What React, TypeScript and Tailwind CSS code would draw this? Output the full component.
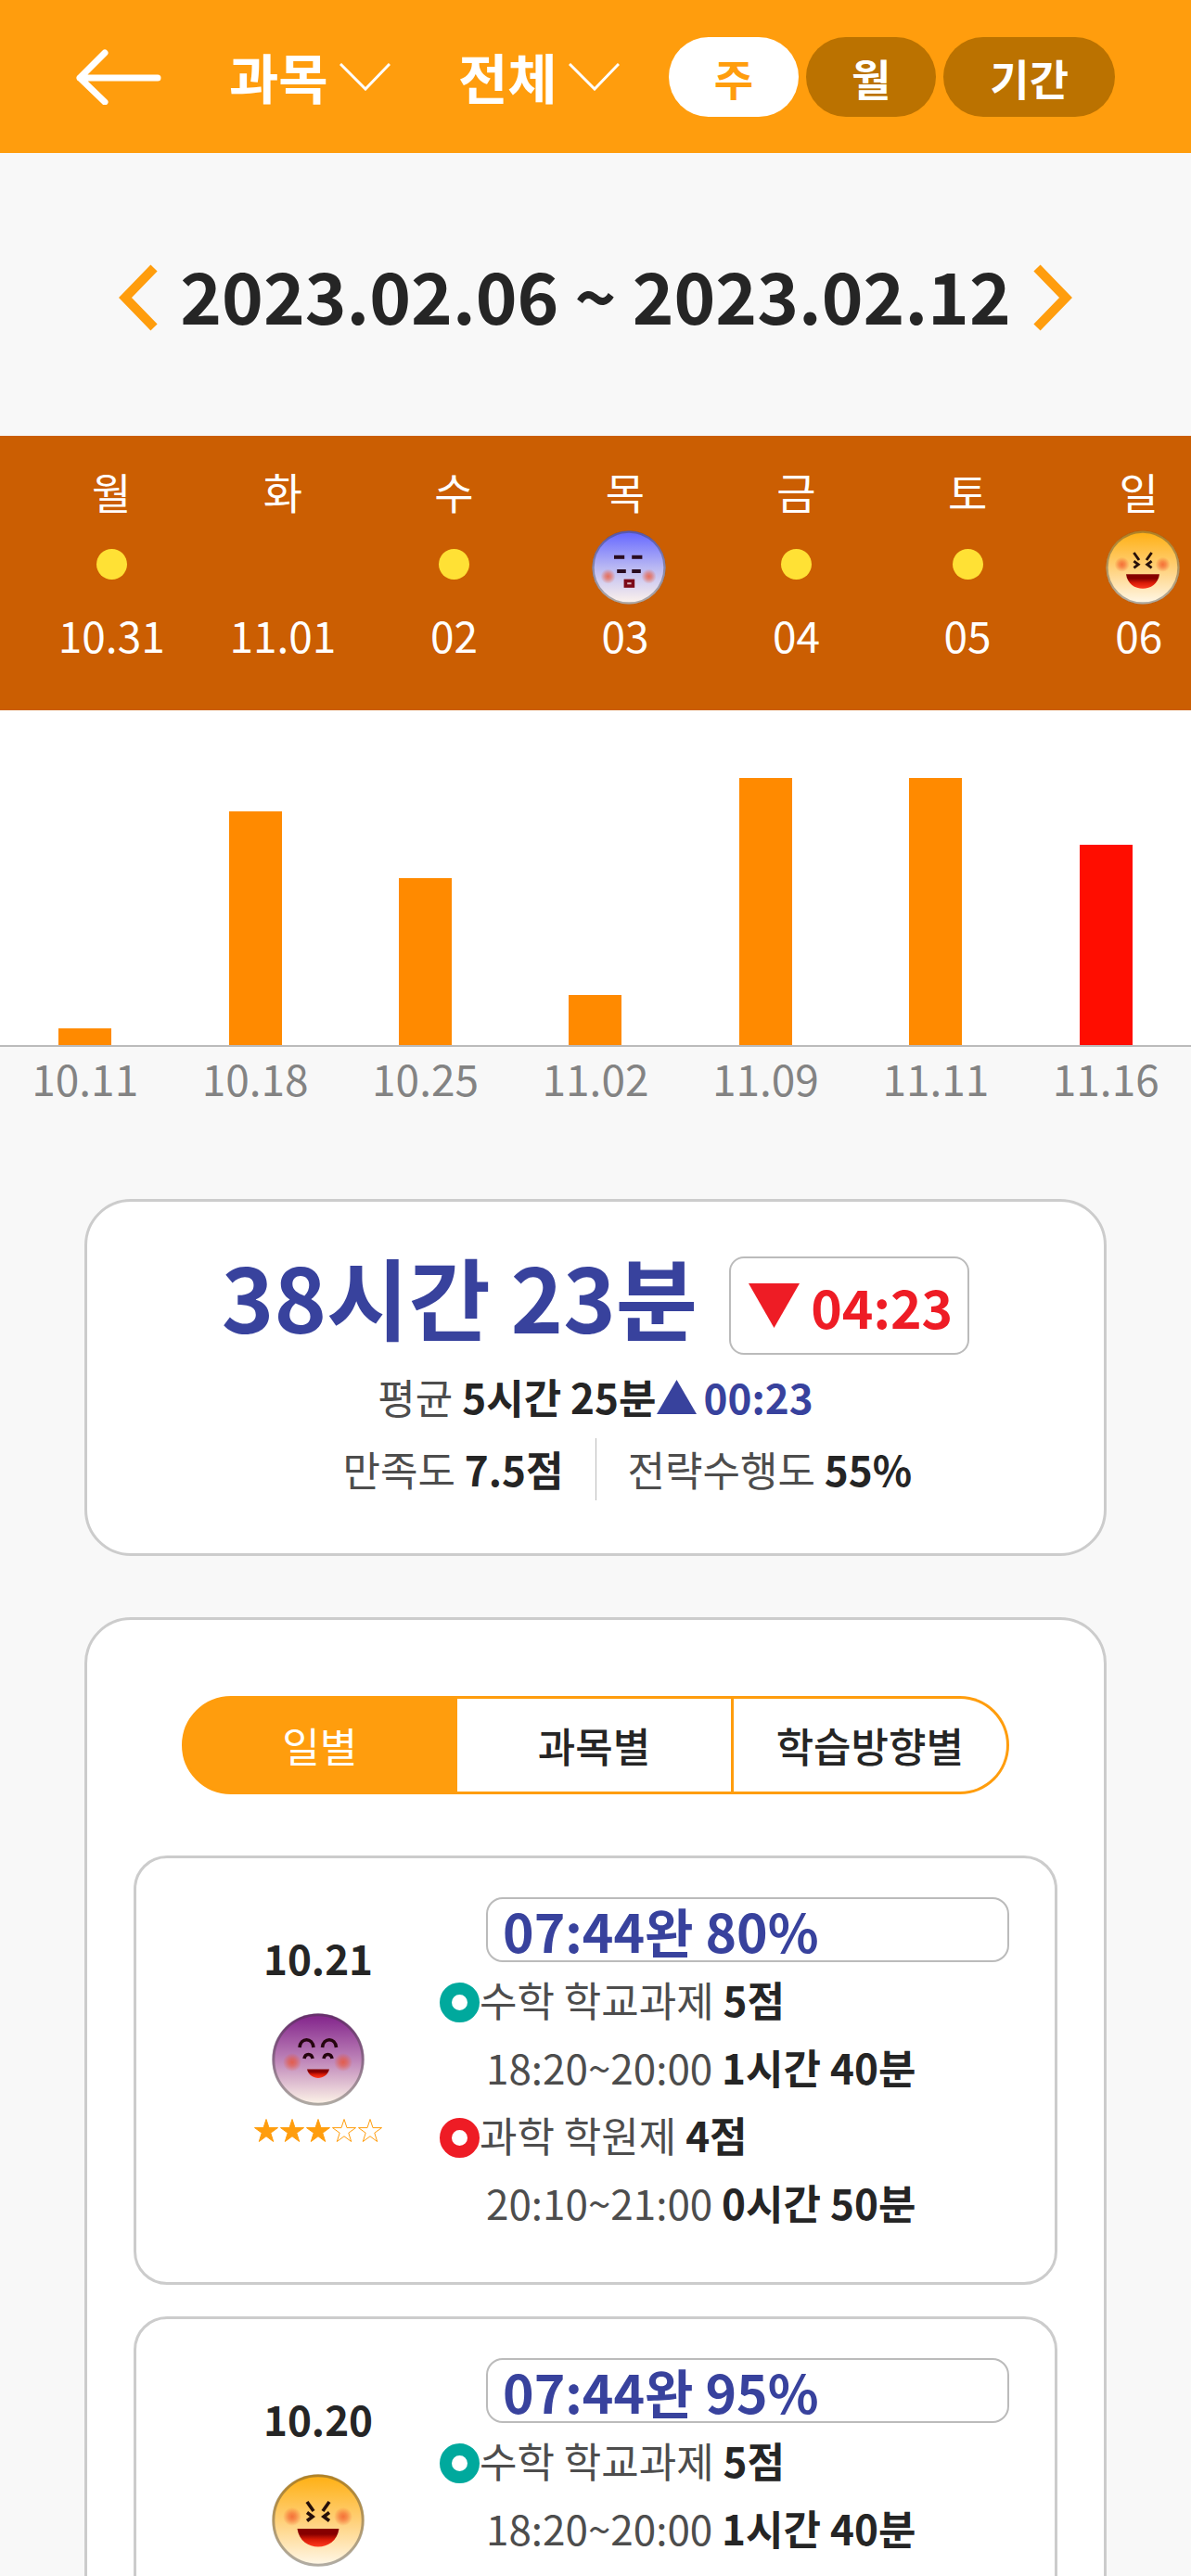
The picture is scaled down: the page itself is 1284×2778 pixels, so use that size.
import { useId } from "react";

type Mood = "sleepy" | "laugh" | "happy";

interface WeekDay {
  day: string;
  date: string;
  mark?: "dot" | Mood;
}

interface Task {
  name: string;
  score: string;
  range: string;
  duration: string;
  ring: string;
}

interface DayRecord {
  date: string;
  mood: Mood;
  stars: number;
  summary: string;
  tasks: Task[];
}

const week: WeekDay[] = [
  { day: "월", date: "10.31", mark: "dot" },
  { day: "화", date: "11.01" },
  { day: "수", date: "02", mark: "dot" },
  { day: "목", date: "03", mark: "sleepy" },
  { day: "금", date: "04", mark: "dot" },
  { day: "토", date: "05", mark: "dot" },
  { day: "일", date: "06", mark: "laugh" },
];

const chart = [
  { label: "10.11", value: 1 },
  { label: "10.18", value: 14 },
  { label: "10.25", value: 10 },
  { label: "11.02", value: 3 },
  { label: "11.09", value: 16 },
  { label: "11.11", value: 16 },
  { label: "11.16", value: 12, active: true },
];

const UNIT_HEIGHT = 18;

const tasks: Task[] = [
  {
    name: "수학 학교과제",
    score: "5점",
    range: "18:20~20:00",
    duration: "1시간 40분",
    ring: "border-[#00a99d]",
  },
  {
    name: "과학 학원제",
    score: "4점",
    range: "20:10~21:00",
    duration: "0시간 50분",
    ring: "border-[#ee1c25]",
  },
];

const records: DayRecord[] = [
  { date: "10.21", mood: "happy", stars: 3, summary: "07:44완 80%", tasks },
  { date: "10.20", mood: "laugh", stars: 3, summary: "07:44완 95%", tasks },
];

const moodColors = {
  sleepy: { top: "#6a6cff", middle: "#b9b8f3", bottom: "#fbf1ec", cheekY: 62 },
  laugh: { top: "#ffb21a", middle: "#ffd078", bottom: "#fff6e4", cheekY: 46 },
  happy: { top: "#862a8e", middle: "#bd83b8", bottom: "#fbf0e6", cheekY: 53 },
};

const Face = ({ mood, className }: { mood: Mood; className: string }) => {
  const id = useId();
  const { top, middle, bottom, cheekY } = moodColors[mood];

  return (
    <svg className={className} viewBox="0 0 100 100" aria-hidden="true">
      <defs>
        <linearGradient id={`${id}-skin`} x1="0" y1="0" x2="0" y2="1">
          <stop offset="0.05" stopColor={top} />
          <stop offset="0.5" stopColor={middle} />
          <stop offset="0.97" stopColor={bottom} />
        </linearGradient>
        <radialGradient id={`${id}-cheek`}>
          <stop offset="0" stopColor="#f04a20" stopOpacity="0.7" />
          <stop offset="0.4" stopColor="#f04a20" stopOpacity="0.5" />
          <stop offset="1" stopColor="#f04a20" stopOpacity="0" />
        </radialGradient>
        <linearGradient id={`${id}-mouth`} x1="0" y1="0" x2="0" y2="1">
          <stop offset="0.3" stopColor="#860000" />
          <stop offset="0.6" stopColor="#d81a06" />
          <stop offset="1" stopColor="#ff3a20" />
        </linearGradient>
      </defs>
      <circle cx="50" cy="50" r="49.5" fill={`url(#${id}-skin)`} />
      <circle cx="50" cy="50" r="48.2" fill="none" stroke="#3c3c3c" strokeOpacity="0.4" strokeWidth="3" />
      <circle cx="22" cy={cheekY} r="10" fill={`url(#${id}-cheek)`} />
      <circle cx="77" cy={cheekY} r="10" fill={`url(#${id}-cheek)`} />
      {mood === "happy" && (
        <>
          <g fill="none" stroke="#26050f" strokeWidth="3.6">
            <path d="M30 37 C31 26 44 26 45 37" />
            <path d="M54.500 37 C55.500 26 68.500 26 69.500 37" />
            <path d="M35 49 C36 43 43 43 44 49" />
            <path d="M56 49 C57 43 64 43 65 49" />
          </g>
          <path d="M38 60.500 H62 C59 73 41 73 38 60.500Z" fill={`url(#${id}-mouth)`} />
        </>
      )}
      {mood === "laugh" && (
        <>
          <g fill="none" stroke="#26100a" strokeWidth="3.6">
            <path d="M38 30 L45 40" />
            <path d="M62 30 L55 40" />
            <path d="M38 41.500 L44 46 L38 50.500" />
            <path d="M62 41.500 L56 46 L62 50.500" />
          </g>
          <path d="M27.500 59 H72.500 C69 85 31 85 27.500 59Z" fill={`url(#${id}-mouth)`} />
        </>
      )}
      {mood === "sleepy" && (
        <>
          <g stroke="#2a0c20" strokeWidth="5">
            <path d="M30 36 H44" />
            <path d="M54 36 H68" />
            <path d="M34 55 H46" />
            <path d="M54 55 H66" />
          </g>
          <rect x="45.500" y="68" width="10" height="7" fill="#d9b4bd" stroke="#7c0a18" strokeWidth="4.500" />
        </>
      )}
    </svg>
  );
};

const Filter = ({ id, label }: { id: string; label: string }) => (
  <div className="flex items-center gap-2">
    <label htmlFor={id} className="sr-only">
      {label}
    </label>
    <select id={id} className="appearance-none overflow-visible bg-transparent px-1 text-[58px] leading-normal font-bold text-white">
      <option>{label}</option>
    </select>
    <svg className="h-[30px] w-[55px]" viewBox="0 0 55 30" fill="none" stroke="white" strokeWidth="3" aria-hidden="true">
      <path d="M1 1 L28 28 L54 1" />
    </svg>
  </div>
);

const Header = () => (
  <header className="flex items-center bg-[#ff9d0d] px-[82px] py-[39px]">
    <button type="button" aria-label="뒤로" className="mr-[69px]">
      <svg className="h-[60px] w-[92px]" viewBox="0 0 92 60" fill="none" stroke="white" strokeWidth="7" strokeLinecap="round" strokeLinejoin="round" aria-hidden="true">
        <path d="M31 4 L4 31 L31 57 M4 31 H88" />
      </svg>
    </button>
    <div className="flex gap-[69px]">
      <Filter id="subject" label="과목" />
      <Filter id="range" label="전체" />
    </div>
    <div className="ml-auto flex gap-2 text-[46px] leading-[86px] font-bold">
      <button type="button" className="rounded-full bg-white px-[49px] text-[#ff9d0d]">
        주
      </button>
      <button type="button" className="rounded-full bg-[#bb7200] px-[49px] text-white">
        월
      </button>
      <button type="button" className="rounded-full bg-[#bb7200] px-[50px] text-white">
        기간
      </button>
    </div>
  </header>
);

const Period = () => (
  <div className="flex items-center justify-center gap-6 pt-[92px] pb-[93px]">
    <button type="button" aria-label="이전" className="pt-2">
      <svg className="h-[72px] w-[42px]" viewBox="0 0 42 72" fill="none" stroke="#ff9d0d" strokeWidth="10" aria-hidden="true">
        <path d="M38 4 L7 36 L38 68" />
      </svg>
    </button>
    <h1 className="text-[76px] leading-[120px] font-bold text-[#252525]">2023.02.06 ~ 2023.02.12</h1>
    <button type="button" aria-label="다음" className="pt-2">
      <svg className="h-[72px] w-[42px]" viewBox="0 0 42 72" fill="none" stroke="#ff9d0d" strokeWidth="10" aria-hidden="true">
        <path d="M4 4 L35 36 L4 68" />
      </svg>
    </button>
  </div>
);

const WeekStrip = () => (
  <div className="overflow-hidden bg-[#cb5e02] pt-[29px] pb-[52px] pl-[28px] text-[46px] leading-[60px] text-white">
    {/* The strip runs a little past the right edge */}
    <ul className="-mr-9 flex">
      {week.map(({ day, date, mark }) => (
        <li key={day} className="flex w-1/7 shrink-0 flex-col items-center">
          <span>{day}</span>
          <span className="mt-[13px] mb-[2px] flex h-[80px] items-center">
            {mark === "dot" && <span className="mb-2 size-[33px] rounded-full bg-[#ffe135]" />}
            {mark && mark !== "dot" && <Face mood={mark} className="ml-2 size-[80px]" />}
          </span>
          <span>{date}</span>
        </li>
      ))}
    </ul>
  </div>
);

const Chart = () => (
  <div>
    <div className="grid grid-cols-7 items-end justify-items-center border-b-2 border-[#bbbbbb] bg-white pt-[73px]">
      {chart.map(({ label, value, active }) => (
        <div
          key={label}
          className={active ? "w-[57px] bg-[#ff0d00]" : "w-[57px] bg-[#ff8a00]"}
          style={{ height: value * UNIT_HEIGHT }}
        />
      ))}
    </div>
    <div className="grid grid-cols-7 pt-[3px] text-center text-[46px] leading-[60px] text-[#838383]">
      {chart.map(({ label }) => (
        <span key={label}>{label}</span>
      ))}
    </div>
  </div>
);

const Summary = () => (
  <section className="mx-[91px] mt-[101px] flex flex-col items-center rounded-[50px] border-3 border-[#cccccc] bg-white pt-[35px] pb-[52px] text-[44px] leading-[78px] text-[#4d4d4d]">
    <div className="flex items-center gap-[34px]">
      <p className="text-[96px] leading-[132px] font-bold text-[#38429d]">38시간 23분</p>
      <p className="mt-[22px] flex items-center gap-3 rounded-2xl border-2 border-[#bbbbbb] pr-[16px] pl-[19px] text-[57px] leading-[102px] font-bold text-[#ee1c25]">
        <svg className="h-[48px] w-[55px]" viewBox="0 0 55 48" fill="currentColor" aria-hidden="true">
          <path d="M0 0 H55 L27.500 48Z" />
        </svg>
        04:23
      </p>
    </div>
    <p className="mt-1 flex items-center">
      <span>
        평균 <strong className="text-[#252525]">5시간 25분</strong>
      </span>
      <svg className="mr-2 h-[37px] w-[43px]" viewBox="0 0 43 37" fill="#38429d" aria-hidden="true">
        <path d="M0 37 H43 L21.500 0Z" />
      </svg>
      <strong className="text-[#38429d]">00:23</strong>
    </p>
    <div className="flex w-full items-center">
      <span className="flex-1 text-right">
        만족도 <strong className="text-[#252525]">7.5점</strong>
      </span>
      <span className="mx-[34px] h-[67px] w-px bg-[#bbbbbb]" />
      <span className="flex-1">
        전략수행도 <strong className="text-[#252525]">55%</strong>
      </span>
    </div>
  </section>
);

const Stars = ({ count }: { count: number }) => (
  <div className="flex text-[#ff9d0d]" role="img" aria-label={`${count}/5`}>
    {[0, 1, 2, 3, 4].map((i) => (
      <svg key={i} className="size-[28px]" viewBox="0 0 28 28" fill={i < count ? "currentColor" : "none"} stroke="currentColor" aria-hidden="true">
        <path d="M14 1.500 L17 10.600 H26.500 L18.800 16.200 L21.700 25.500 L14 19.800 L6.300 25.500 L9.200 16.200 L1.500 10.600 H11Z" />
      </svg>
    ))}
  </div>
);

const RecordCard = ({ record }: { record: DayRecord }) => (
  <li className="flex rounded-[36px] border-3 border-[#cccccc] pt-[42px] pr-[49px] pb-[49px]">
    <div className="flex w-[327px] shrink-0 flex-col items-center pt-[32px] pl-[65px]">
      <p className="text-[44px] leading-[66px] font-bold text-[#252525]">{record.date}</p>
      <Face mood={record.mood} className="mt-[27px] mb-[13px] size-[100px]" />
      <Stars count={record.stars} />
    </div>
    <div className="flex-1 text-[44px] leading-[73px] text-[#4d4d4d]">
      <p className="mb-1 ml-[50px] rounded-[18px] border-2 border-[#bbbbbb] pl-[16px] text-[57px] leading-[66px] font-bold text-[#38429d]">
        {record.summary}
      </p>
      {record.tasks.map(({ name, score, range, duration, ring }) => (
        <div key={name}>
          <p className="flex items-center">
            <span className={`mt-[6px] size-[43px] rounded-full border-[13px] ${ring}`} />
            <span>
              {name} <strong className="text-[#252525]">{score}</strong>
            </span>
          </p>
          <p className="ml-[50px]">
            {range} <strong className="text-[#252525]">{duration}</strong>
          </p>
        </div>
      ))}
    </div>
  </li>
);

const Records = () => (
  <section className="mx-[91px] mt-[66px] rounded-[50px] border-3 border-[#cccccc] bg-white px-[50px] pt-[82px] pb-[50px]">
    <div className="mx-[52px] grid grid-cols-3 text-[44px] leading-[100px] text-[#252525]">
      <button type="button" className="rounded-l-full border-3 border-[#ff9d0d] bg-[#ff9d0d] text-white">
        일별
      </button>
      <button type="button" className="border-y-3 border-r-3 border-[#ff9d0d] font-medium">
        과목별
      </button>
      <button type="button" className="rounded-r-full border-y-3 border-r-3 border-[#ff9d0d] font-medium">
        학습방향별
      </button>
    </div>
    <ul className="mt-[66px] flex flex-col gap-[34px]">
      {records.map((record) => (
        <RecordCard key={record.date} record={record} />
      ))}
    </ul>
  </section>
);

export default function App() {
  return (
    <div className="h-screen overflow-hidden bg-[#f8f8f8] font-['Noto_Sans_CJK_KR',sans-serif]">
      <Header />
      <main>
        <Period />
        <WeekStrip />
        <Chart />
        <Summary />
        <Records />
      </main>
    </div>
  );
}
